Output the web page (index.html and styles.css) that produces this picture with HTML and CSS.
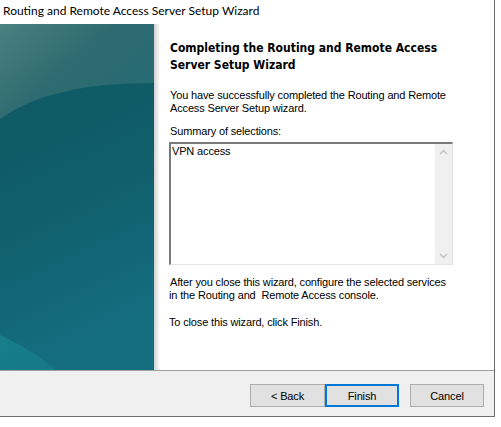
FILE: index.html
```html
<!DOCTYPE html>
<html>
<head>
<meta charset="utf-8">
<link rel="stylesheet" href="styles.css">
</head>
<body>
<div class="window">
  <div class="titlebar">Routing and Remote Access Server Setup Wizard</div>
  <div class="main">
    <div class="side">
      <svg width="154" height="346" viewBox="0 0 154 346" xmlns="http://www.w3.org/2000/svg">
        <defs>
          <linearGradient id="bg" x1="0" y1="0" x2="0.4" y2="1">
            <stop offset="0" stop-color="#4a8180"/>
            <stop offset="0.25" stop-color="#2f6b70"/>
            <stop offset="1" stop-color="#146c7e"/>
          </linearGradient>
          <linearGradient id="wave" x1="0" y1="0" x2="0.25" y2="1">
            <stop offset="0" stop-color="#0e5963"/>
            <stop offset="0.5" stop-color="#105f6c"/>
            <stop offset="1" stop-color="#146e80"/>
          </linearGradient>
          <linearGradient id="lite" x1="0" y1="0" x2="1" y2="1">
            <stop offset="0" stop-color="#18838d"/>
            <stop offset="1" stop-color="#167a88"/>
          </linearGradient>
        </defs>
        <rect width="154" height="346" fill="url(#bg)"/>
        <path d="M0 95 C 35 70, 85 59, 154 59 L154 346 L0 346 Z" fill="url(#wave)"/>
        <path d="M0 311 C 20 320, 40 333, 56 346 L0 346 Z" fill="url(#lite)" opacity="0.8"/>
      </svg>
    </div>
    <div class="shade"></div>
    <div class="content">
      <h1 class="heading">Completing the Routing and Remote Access Server Setup Wizard</h1>
      <p class="intro">You have successfully completed the Routing and Remote Access Server Setup wizard.</p>
      <p class="label">Summary of selections:</p>
      <div class="summary">
        <div class="summary-text">VPN access</div>
        <div class="scrollbar">
          <svg class="arrow" width="17" height="17" viewBox="0 0 17 17"><path d="M5 10 L8.5 6.5 L12 10" fill="none" stroke="#c2c2c2" stroke-width="1.3"/></svg>
          <svg class="arrow" width="17" height="17" viewBox="0 0 17 17"><path d="M5 7 L8.5 10.5 L12 7" fill="none" stroke="#c2c2c2" stroke-width="1.3"/></svg>
        </div>
      </div>
      <p class="after">After you close this wizard, configure the selected services<br><span class="in">in the Routing and&nbsp; Remote Access console.</span></p>
      <p class="close">To close this wizard, click Finish.</p>
    </div>
  </div>
  <div class="footer">
    <button class="btn back">&lt; Back</button>
    <button class="btn primary">Finish</button>
    <button class="btn cancel">Cancel</button>
  </div>
</div>
</body>
</html>
```
FILE: styles.css
```css
html, body {
  margin: 0;
  padding: 0;
  background: #ffffff;
}
body {
  width: 501px;
  height: 427px;
  overflow: hidden;
  font-family: "Liberation Sans", Arial, sans-serif;
  font-size: 11px;
  letter-spacing: -0.15px;
  color: #000;
}
.window {
  width: 494px;
  height: 416px;
  border-right: 1px solid #6e6e6e;
  border-bottom: 1px solid #6e6e6e;
  display: flex;
  flex-direction: column;
}
.titlebar {
  flex: none;
  height: 24px;
  box-sizing: border-box;
  padding: 3px 0 0 3px;
  font-family: Lato, "Open Sans", sans-serif;
  font-size: 12px;
  letter-spacing: 0;
  line-height: 16px;
  color: #000;
}
.main {
  flex: none;
  height: 346px;
  display: flex;
}
.side {
  width: 154px;
  height: 346px;
}
.side svg {
  display: block;
}
.shade {
  width: 6px;
  background: linear-gradient(to right, #cfcfcf, #ececec 60%, #ffffff);
}
.content {
  flex: 1;
  padding: 16px 0 0 10px;
}
.heading {
  margin: 0;
  width: 300px;
  font-family: "DejaVu Sans Condensed", "DejaVu Sans", sans-serif;
  font-stretch: condensed;
  font-weight: bold;
  font-size: 12px;
  letter-spacing: 0;
  line-height: 17px;
}
.intro {
  margin: 15px 0 0;
  width: 290px;
  line-height: 13px;
}
.label {
  margin: 10px 0 0;
  line-height: 13px;
}
.summary {
  margin: 4px 0 0 -1px;
  width: 284px;
  height: 123px;
  box-sizing: border-box;
  border-top: 2px solid #7a7a7a;
  border-left: 2px solid #7a7a7a;
  border-right: 1px solid #e3e3e3;
  border-bottom: 1px solid #e3e3e3;
  display: flex;
  background: #fff;
}
.summary-text {
  flex: 1;
  padding: 1px 0 0 1px;
  line-height: 13px;
}
.scrollbar {
  width: 17px;
  background: #f0f0f0;
  display: flex;
  flex-direction: column;
  justify-content: space-between;
}
.arrow {
  display: block;
}
.after {
  margin: 11px 0 0;
  line-height: 13px;
}
.after .in {
  margin-left: -1px;
}
.close {
  margin: 14px 0 0 -1px;
  line-height: 13px;
}
.footer {
  flex: none;
  height: 46px;
  box-sizing: border-box;
  border-top: 1px solid #a0a0a0;
  background: #f0f0f0;
  display: flex;
  align-items: flex-start;
  padding: 13px 0 0 250px;
}
.btn {
  width: 74px;
  height: 23px;
  box-sizing: border-box;
  border: 1px solid #adadad;
  background: #e1e1e1;
  font-family: "Liberation Sans", Arial, sans-serif;
  font-size: 11px;
  letter-spacing: -0.15px;
  color: #000;
  padding: 0;
  margin: 0;
}
.back {
  width: 75px;
}
.primary {
  border: 2px solid #0078d7;
}
.cancel {
  margin-left: 11px;
}
```
